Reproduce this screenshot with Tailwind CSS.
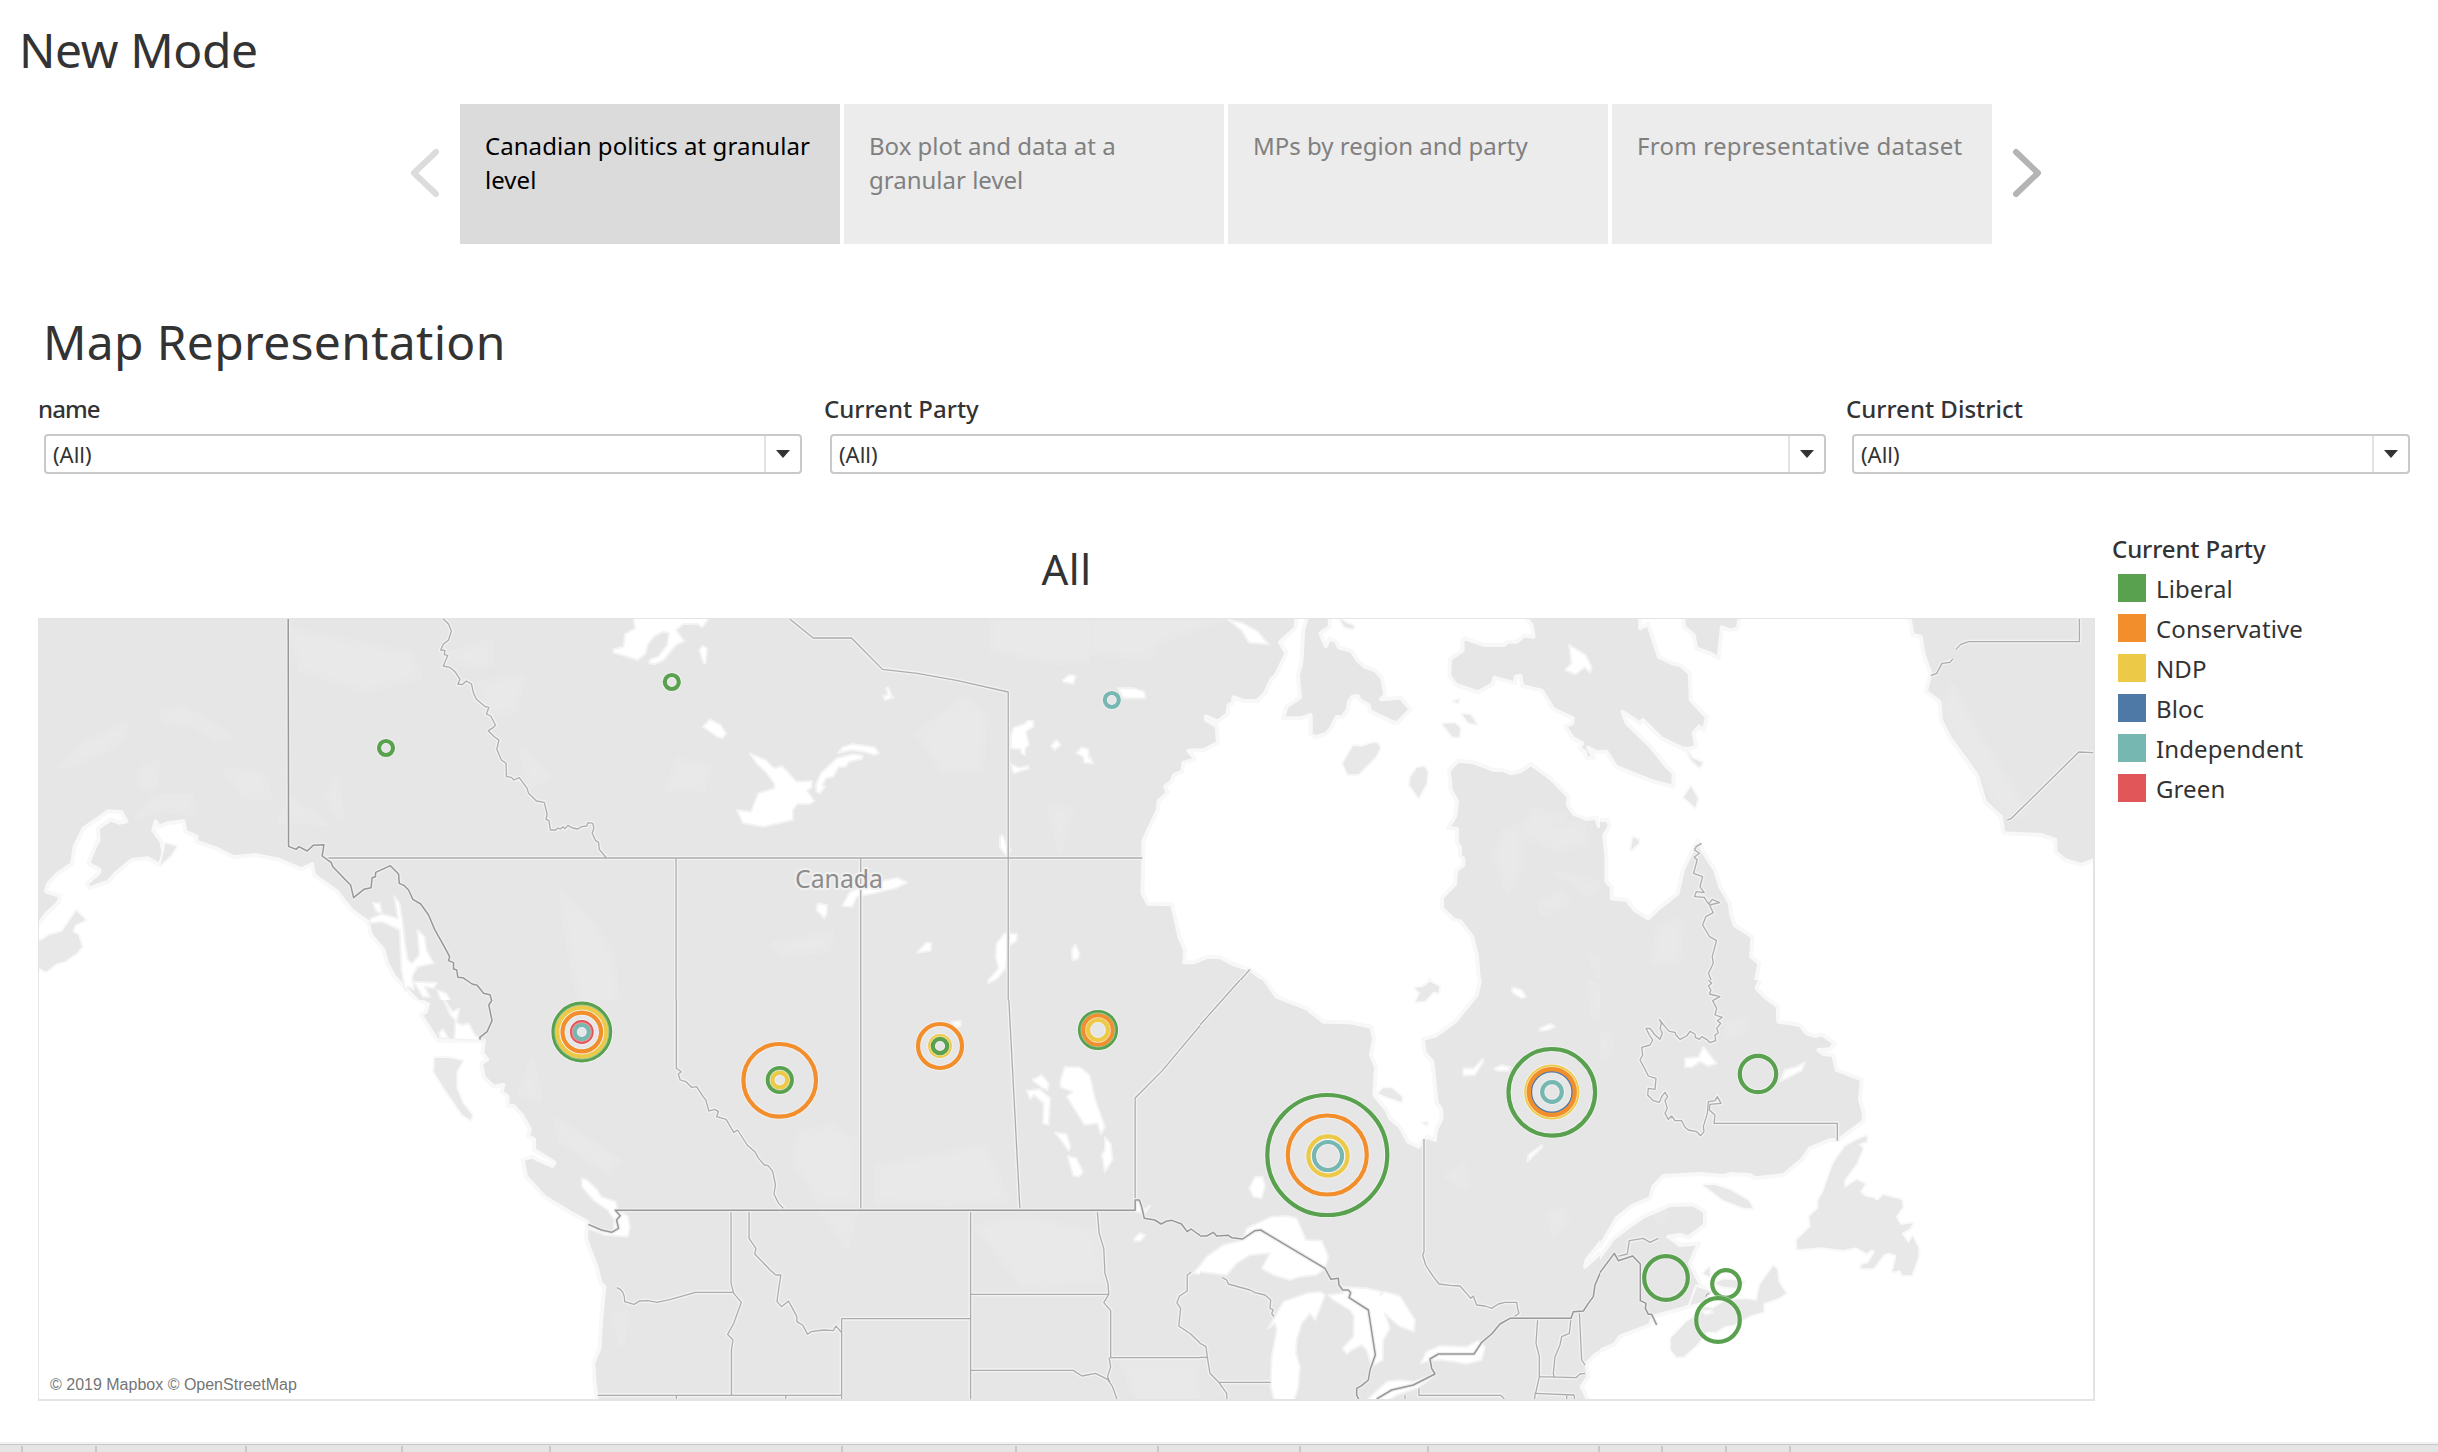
<!DOCTYPE html>
<html lang="en">
<head>
<meta charset="utf-8">
<title>New Mode</title>
<script src="https://cdn.jsdelivr.net/npm/@tailwindcss/browser@4"></script>
</head>
<body class="bg-white">
<main class="flex h-[1452px] w-[2438px] flex-col overflow-hidden bg-white font-['Noto_Sans','Open_Sans',sans-serif] text-[#333]">
  <h1 class="h-[104px] shrink-0 pl-[19px] text-[48px] leading-[99px] tracking-[-0.4px]">New Mode</h1>

  <nav class="flex h-[140px] shrink-0 items-stretch pl-[408px]">
    <svg class="mt-[42px] mr-[18px] h-[54px] w-[34px]" viewBox="0 0 34 54" fill="none" stroke="#dcdcdc" stroke-width="6" stroke-linecap="round" stroke-linejoin="round"><path d="M28 6L6 27L28 48"/></svg>
    <div class="flex gap-1 text-[24px] leading-[34px] text-[#808080]">
      <div class="w-[380px] bg-[#dbdbdb] pt-[25px] pr-4 pl-[25px] tracking-[0.05px] text-black">Canadian politics at granular level</div>
      <div class="w-[380px] bg-[#ececec] pt-[25px] pr-20 pl-[25px]">Box plot and data at a granular level</div>
      <div class="w-[380px] bg-[#ececec] pt-[25px] pr-4 pl-[25px]">MPs by region and party</div>
      <div class="w-[380px] bg-[#ececec] pt-[25px] pr-4 pl-[25px] tracking-[0.25px]">From representative dataset</div>
    </div>
    <svg class="mt-[42px] ml-[18px] h-[54px] w-[34px]" viewBox="0 0 34 54" fill="none" stroke="#b4b4b4" stroke-width="6" stroke-linecap="round" stroke-linejoin="round"><path d="M6 6L28 27L6 48"/></svg>
  </nav>

  <h2 class="mt-[67px] shrink-0 pl-[43px] text-[48px] leading-[62px] tracking-[0.3px]">Map Representation</h2>

  <section class="mt-[20px] flex h-[81px] shrink-0 pl-[38px]">
    <div class="w-[786px]">
      <div class="text-[24px] leading-8 font-medium tracking-[-0.9px]">name</div>
      <div class="mt-[9px] ml-[6px] flex h-10 w-[758px] rounded border-2 border-[#c9c9c9]">
        <span class="flex-1 pl-[7px] text-[22px] leading-[36px]">(All)</span>
        <span class="flex w-9 items-center justify-center border-l-2 border-[#e3e3e3]"><svg class="h-2 w-[14px]" viewBox="0 0 14 8" fill="#333"><path d="M0 0H14L7 8Z"/></svg></span>
      </div>
    </div>
    <div class="w-[1022px]">
      <div class="text-[24px] leading-8 font-medium">Current Party</div>
      <div class="mt-[9px] ml-[6px] flex h-10 w-[996px] rounded border-2 border-[#c9c9c9]">
        <span class="flex-1 pl-[7px] text-[22px] leading-[36px]">(All)</span>
        <span class="flex w-9 items-center justify-center border-l-2 border-[#e3e3e3]"><svg class="h-2 w-[14px]" viewBox="0 0 14 8" fill="#333"><path d="M0 0H14L7 8Z"/></svg></span>
      </div>
    </div>
    <div>
      <div class="text-[24px] leading-8 font-medium">Current District</div>
      <div class="mt-[9px] ml-[6px] flex h-10 w-[558px] rounded border-2 border-[#c9c9c9]">
        <span class="flex-1 pl-[7px] text-[22px] leading-[36px]">(All)</span>
        <span class="flex w-9 items-center justify-center border-l-2 border-[#e3e3e3]"><svg class="h-2 w-[14px]" viewBox="0 0 14 8" fill="#333"><path d="M0 0H14L7 8Z"/></svg></span>
      </div>
    </div>
  </section>

  <section class="flex h-[968px] shrink-0 pl-[38px]">
    <div class="w-[2057px] pt-[67px]">
      <h3 class="h-[77px] text-center text-[42px] leading-[56px] tracking-[0.5px]">All</h3>
      <div class="relative h-[783px] border-t border-r-2 border-b-2 border-l border-[#e4e4e4]">
        <svg id="map" class="block h-[780px] w-[2054px]" viewBox="39 619 2054 780"></svg>
        <span class="absolute bottom-[2px] left-[11px] font-['Liberation_Sans',Arial,sans-serif] text-[16px] leading-6 text-[#757575]">© 2019 Mapbox © OpenStreetMap</span>
      </div>
    </div>
    <aside class="pt-[59px] pl-[17px]">
      <div class="mb-[3px] text-[24px] leading-8 font-medium tracking-[-0.1px]">Current Party</div>
      <ul id="legend" class="pl-[6px] text-[24px] leading-10 tracking-[0.1px]"></ul>
    </aside>
  </section>

  <footer class="mt-auto h-[10px] shrink-0 border-t-2 border-[#f2f2f2]">
    <div id="tabs" class="flex h-2 border-t border-[#c8c8c8] bg-[#e5e5e5] pt-px"></div>
  </footer>
</main>
<script>
const C = {g:'#59a14f', o:'#f28e2b', y:'#edc948', b:'#4e79a7', t:'#76b7b2', r:'#e15759'};

document.getElementById('legend').innerHTML = [['Liberal','g'],['Conservative','o'],['NDP','y'],['Bloc','b'],['Independent','t'],['Green','r']]
  .map(([n,c]) => `<li class="flex h-10 items-center gap-[10px]"><i class="block size-7" style="background:${C[c]}"></i><span class="pt-[2px]">${n}</span></li>`).join('');

let last = 0;
document.getElementById('tabs').innerHTML = [23,97,247,403,551,843,1017,1159,1301,1429,1600,1663,1727,1791]
  .map(x => { const w = x - last; last = x; return `<i class="block h-full shrink-0 border-r-2 border-[#c8c8c8]" style="width:${w}px"></i>`; }).join('');

// Base map tiles: shade, water, isles, lakes, province lines, country lines
const tiles = [
 {x:30,y:610,w:560,h:400,v:'1568 1200',
  shade:'M90,470L150,400 270,340 260,385 200,430 130,460ZM370,310L430,290 560,380 520,385 460,345 380,335ZM550,480L650,490 670,560 600,560ZM300,500L320,470 355,460 350,530 310,535ZM730,60L1060,130 1090,200 940,240 760,180ZM1150,140L1290,95 1290,160 1250,170ZM1260,220L1380,200 1360,300 1290,310ZM1380,420L1450,500 1400,530ZM300,620L350,560 450,560 460,610 370,600ZM730,570L830,640 700,630ZM830,560L860,510 870,620Z',
  water:'M20,948L45,912 78,880 86,858 45,845 50,822 78,790 118,762 125,710 150,655 185,630 218,604 255,606 270,634 250,638 225,628 190,655 192,690 180,715 163,760 195,780 192,790 160,820 165,835 220,815 240,790 285,750 330,745 362,765 375,735 368,695 345,660 352,634 362,650 385,640 430,634 435,665 466,680 465,695 520,715 570,742 630,735 700,750 760,778 790,762 795,795 860,845 900,900 945,935 955,975 990,1020 1000,1060 1020,1100 1060,1145 1110,1200 1115,1220 0,1220 0,960Z',
  isles:'M10,1005L55,975 90,965 130,902 155,930 125,945 120,965 135,975 145,1010 130,1030 95,1055 75,1060 45,1085 10,1065ZM365,765L380,700 410,710 395,735Z',
  lakes:'M960,878L980,880 985,908 970,905ZM1020,858L1035,880 1040,915 1045,950 1050,1000 1058,1050 1070,1060 1090,1035 1085,960 1105,980 1110,1020 1130,1060 1085,1070 1070,1100 1075,1140 1060,1130 1050,1140 1040,1080 1035,960 985,935 950,940 955,925 985,912 1030,925ZM1075,1115L1140,1118 1130,1135 1105,1130 1120,1160 1100,1160ZM1140,1140L1165,1150 1180,1175 1175,1200 1150,1170Z',
  thin:'M825,744H1568M1157,27L1172,42 1180,63 1172,90 1157,103 1150,120 1162,122 1160,134 1170,136 1157,168 1175,172 1190,185 1204,208 1198,222 1210,224 1222,213 1236,222 1242,250 1250,268 1275,290 1285,292 1278,312 1290,318 1303,345 1298,352 1283,362 1300,380 1313,390 1307,418 1320,450 1333,460 1334,500 1348,502 1355,510 1370,503 1392,535 1396,550 1418,573 1440,577 1448,612 1445,628 1453,632 1457,660 1472,660 1478,654 1488,658 1492,648 1498,654 1508,645 1520,655 1535,658 1560,648 1568,636',
  bold:'M723,27L724,709 745,718 753,710 776,723 793,706 823,704 818,738 843,757 848,770 898,826 906,863 935,838 955,833 958,803 967,800 968,787 1009,767 1032,792 1034,820 1047,826 1060,840 1072,868 1094,882 1116,915 1133,958 1160,1010 1175,1040 1172,1052 1186,1058 1186,1077 1195,1080 1198,1102 1212,1103 1238,1122 1252,1126 1270,1150 1288,1154 1292,1170 1285,1200'},
 {x:560,y:610,w:560,h:400,v:'1568 1200',
  shade:'M1000,370L1130,270 1190,310 1180,480 1070,480ZM1210,27H1568V130L1400,160 1210,120ZM300,540L330,450 420,470 400,540ZM0,850L100,950 150,1050 160,1200 60,1200ZM600,1000L760,970 750,1020 620,1030ZM1370,590L1430,600 1400,720Z',
  lakes:'M203,10H425L416,27 398,52 385,42 345,42 325,60 348,93 325,105 290,150 265,163 250,160 252,148 275,140 300,105 305,70 290,65 265,78 245,105 240,130 218,150 150,128 150,118 178,110 182,72 210,55ZM390,120L400,107 412,115 408,160 402,160ZM400,350L420,328 450,345 465,370 455,385 440,380ZM532,430L575,450 600,475 622,468 662,515 705,513 705,530 692,543 712,573 700,582 665,582 652,600 652,630 570,650 512,640 496,600 535,605 555,550 600,535 600,520 575,485 550,460ZM778,430L790,412 818,402 882,412 893,430 880,435 850,425 815,420ZM716,525L730,490 775,445 820,432 848,437 845,447 810,455 800,470 780,472 765,500 745,505 735,525 742,530 728,550 718,545ZM905,258L918,255 913,235 918,232 925,245 928,258 935,262 910,270ZM1408,210L1425,195 1443,197 1438,222 1410,216ZM1262,380L1270,352 1300,342 1310,332 1326,332 1325,350 1305,365 1313,403 1303,415 1302,435 1292,430 1290,418 1262,415ZM1262,462L1285,473 1312,468 1312,476 1270,490ZM1375,408L1390,390 1402,404 1385,420ZM1446,430L1460,412 1480,418 1480,440 1492,460 1468,458 1465,440ZM1232,680L1240,676 1248,700 1262,722 1250,738 1232,712ZM790,888L810,848 850,825 945,803 972,818 940,835 830,862 818,890ZM722,880L748,885 747,912 740,925 718,900ZM1000,1028L1025,998 1040,998 1038,1022ZM1222,1000L1245,970 1280,972 1278,992 1255,1010 1248,1075 1225,1105 1200,1120 1198,1112 1228,1075 1220,1040ZM1435,1050L1433,1020 1443,1003 1455,1030 1450,1048Z',
  thin:'M643,27L709,84H816L903,178 1000,190 1110,211 1255,246V1180L1258,1200M0,744H1568M325,744V1200M842,744V1200M0,658L8,650 14,656 22,646 35,654 50,657 60,650 75,648 78,638 92,640 95,655 90,670 100,692 108,697 110,718 130,744'},
 {x:1090,y:610,w:560,h:420,v:'1568 1260',
  shade:'M180,100L370,27H0V130L170,140ZM1130,740L1160,660 1210,650 1205,780 1170,840ZM1240,600L1330,620 1300,650 1380,640 1390,700 1310,720 1200,670ZM1310,790L1430,820 1400,850ZM1400,1040L1460,1060 1430,1105ZM1260,880L1320,850 1340,880 1270,910Z',
  water:'M580,10L575,55 532,97 550,130 520,197 508,208 490,250 468,273 430,273 402,262 400,280 388,285 385,312 358,335 325,320 325,330 355,348 358,398 320,420 275,422 292,442 290,450 262,458 258,485 235,495 230,512 210,530 218,548 192,573 190,600 150,690 147,850 163,881 230,883 250,980 266,1020 264,1057 290,1057 330,1040 365,1042 400,1062 448,1078 500,1120 520,1160 610,1198 650,1235 730,1238 790,1250 800,1280 960,1280 1020,1240 1085,1155 1090,1120 1083,1035 1070,980 1038,935 1018,928 986,895 986,862 1022,822 1025,782 1045,765 1045,745 1036,738 1036,712 1028,700 1027,657 1003,653 1022,620 1028,575 1010,540 1005,482 1030,452 1075,457 1130,480 1155,480 1180,490 1205,483 1235,462 1290,505 1340,560 1338,585 1355,612 1390,627 1417,623 1425,648 1438,645 1450,627 1455,655 1440,685 1446,740 1438,745 1447,760 1447,815 1462,825 1470,850 1460,863 1502,865 1512,895 1550,922 1600,922 1600,508 1568,505 1505,488 1470,465 1448,427 1415,425 1395,413 1412,445 1390,445 1385,425 1370,415 1378,400 1352,385 1330,348 1350,340 1352,325 1297,297 1265,242 1210,228 1205,197 1192,200 1190,220 1132,203 1128,222 1087,247 1025,225 1006,198 1008,147 1043,122 1043,90 1050,85 1105,105 1160,105 1170,95 1195,95 1215,77 1242,80 1237,45 1222,27 1222,10H670L672,50 645,70 660,108 672,85 690,95 697,113 732,122 750,152 770,170 800,182 818,205 827,255 815,268 850,265 870,263 898,298 862,338 850,338 785,305 780,285 755,270 750,258 735,260 725,275 722,300 707,320 690,322 675,355 660,372 630,382 618,372 618,315 590,325 540,325 550,290 588,262 582,195 592,155 597,60 610,10Z',
  isles:'M708,460L737,408 760,410 790,400 805,400 812,415 800,440 752,492 722,493ZM898,500L915,475 935,470 945,485 942,520 920,563 895,525ZM988,342L1022,340 1036,355 1033,380 1015,380ZM1043,313L1065,315 1083,343 1060,338ZM908,1135L930,1128 950,1110 978,1130 975,1145 960,1143 935,1172 915,1175 925,1145ZM1518,683L1536,690 1532,705 1512,720ZM1018,273L1033,270 1030,278ZM700,27L720,40 740,48 735,57 712,50Z',
  lakes:'M388,30L425,38 470,65 500,103 445,98 425,62ZM78,235L120,234 152,245 155,265 95,265ZM1342,105L1388,135 1405,172 1400,188 1385,172 1360,193 1330,180 1348,160ZM1490,307L1508,308 1545,340 1580,345V420L1510,350ZM1537,20H1568V40H1549L1547,57H1537ZM1182,1132L1205,1132 1220,1152 1220,1165 1200,1162ZM-10,440L0,440 8,460H-10Z',
  thin:'M0,744H146M448,1078L296,1260'},
 {x:1200,y:980,w:500,h:472,v:'1500 1416',
  shade:'M1050,700L1090,690 1100,730 1060,760ZM740,590L790,560 800,620ZM1170,10L1260,30 1250,100 1180,110Z',
  water:'M180,-20L195,0 230,50 320,85 370,125 450,127 515,140 522,175 513,225 528,262 523,345 560,390 570,415 600,440 625,485 655,500 680,470 705,480 708,450 725,415 722,385 710,370 697,245 675,220 668,178 710,165 765,125 830,45 840,0V-20ZM1145,1220L1165,1190 1160,1150 1185,1125 1250,1090 1260,1070 1290,1075 1520,1000V1290H1180L1150,1230ZM1155,860L1160,840 1200,790 1250,715 1300,675 1350,655 1360,625 1390,590 1520,580V680L1430,675 1350,700 1260,750 1210,810Z',
  isles:'M535,340L550,325 575,325 605,350 605,365 560,350ZM645,25L670,20 690,5 718,20 715,38 700,35 675,62 648,65 660,38ZM668,428H683L680,435Z',
  lakes:'M-10,870L20,830 70,795 130,780 140,745 215,710 260,708 290,715 318,780 365,782 385,830 375,865 350,885 300,890 270,900 220,885 185,865 210,820 150,825 110,850 80,885 -10,875ZM205,1045L250,965 320,940 360,935 375,945 360,985 345,1020 330,1000 305,1030 290,1080 288,1120 300,1160 295,1220 280,1270H225L212,1220 215,1130 230,1050 225,1030ZM385,945L430,940 425,920 500,925 545,935 540,945 555,935 600,948 645,1020 642,1055 600,1040 570,1015 555,1000 570,1045 550,1080 548,1140 515,1160 500,1110 485,1095 455,1110 440,1122 428,1105 460,1070 462,1010 450,990 400,960ZM490,1270L560,1205 600,1200 640,1205 700,1185 700,1190 650,1225 590,1245 550,1270ZM662,1150L680,1115 720,1097 800,1100 835,1082 855,1100 845,1140 800,1152 765,1145 720,1140 690,1142ZM148,625L165,590 188,590 195,620 185,655 160,650ZM790,265L820,265 848,237 850,245 825,285 790,287ZM883,265L905,255 930,262 925,272 890,272ZM982,545L985,525 1025,495 1028,500ZM1020,145L1050,132 1065,140 1045,150 1020,152ZM937,22L965,30 978,50 965,55 937,38Z',
  thin:'M672,477V815L668,825 677,855 700,890 717,912 750,916 780,918 795,935 812,955 820,948 830,975 855,978 875,985 895,972 915,967 950,967 953,985 957,1000 935,1015M120,0L0,135M67,893L80,900 85,912 150,930 165,938 195,945 212,960 210,985 220,990 215,1000 222,1010M0,1090L18,1100 22,1132 30,1180 55,1205 80,1240 82,1280M0,1132H22M57,1207H212M657,1225V1246H903L913,1257M615,1246V1270M1013,1017L1008,1090 1018,1130V1190L1003,1257M1018,1190L1128,1193 1140,1182 1155,1180M1113,1017L1108,1060 1085,1070 1080,1095 1065,1130 1060,1180 1062,1190M1138,995L1145,1140 1155,1155M1003,1240L1122,1245 1124,1257M1100,1245V1257',
  bold:'M0,768L20,768 40,757 50,768 85,766 95,773 128,777 165,752 182,750 375,865 393,898 415,895 417,915 428,930 445,930 452,938 447,953 505,990 526,1125 510,1170 505,1200 485,1217 470,1225V1245L477,1260M530,1257L575,1230 640,1215 705,1182 695,1165 690,1137 715,1122H822L845,1087 875,1062 900,1032 930,1015H1113L1120,995 1150,993 1165,970 1180,950 1185,915 1200,880 1243,820 1257,840'},
 {x:1600,y:520,w:838,h:480,v:'1568 1440',
  shade:'M640,560L680,700 760,890 800,880 700,620 660,500ZM110,1220L150,1200 150,1320 100,1330Z',
  water:'M75,280V325L90,312 110,410 135,430 150,435 168,460 170,540 190,575 200,590 195,630 185,620 175,640 180,680 160,690 115,655 80,600 75,610 42,575 50,610 95,680 125,740 138,760 137,800 100,785 60,760 30,740 12,695H-20V900H15L18,920 8,945 12,1010 12,1085 22,1100 22,1135 50,1140 65,1170 90,1195 110,1165 145,1120 155,1050 170,1000 183,962 195,1000 215,1050 225,1100 243,1150 245,1180 252,1215 285,1250 283,1310 298,1330 292,1380 310,1420 330,1460H940V1010L900,1035 870,1020 852,995 852,960 825,945 755,940 750,890 720,845 705,765 685,720 655,655 638,600 635,545 610,515 618,460 605,400 600,350 585,345 580,300 570,280H262L258,325 245,332 228,322 222,415 205,400 180,385 175,345 157,320 155,280Z',
  isles:'M170,800L183,835 178,862 157,832ZM62,952L72,960 72,970 58,990ZM160,685L172,715 192,728 186,742 172,722Z',
  thin:'M897,290V365H690L675,373 666,388M660,417L655,427 640,430 630,460 619,467M925,698L896,696 770,895 762,900M190,970L180,980 177,990 186,1000 176,1012 182,1020 175,1060 192,1070 187,1100 195,1118 180,1115 177,1130 195,1132 203,1152 210,1138 224,1148 205,1155 212,1178 198,1190 192,1215 205,1250 218,1262 210,1310 212,1330 203,1360 210,1390 202,1395 205,1415 222,1440'},
 {x:1600,y:980,w:520,h:472,v:'1560 1416',
  shade:'M0,160L30,170 30,220 0,230ZM380,130L430,120 440,150 380,170ZM715,685L735,675 750,690 735,705ZM160,690L200,700 180,730Z',
  water:'M480,-20V0L470,25 500,55 533,78 535,125 570,130 600,135 620,160 645,168 665,163 705,190 690,208 655,210 670,222 700,225 710,270 785,298 780,360 792,400 790,425 715,480 690,480 630,505 605,540 550,585 465,595 450,585 395,582 370,588 300,582 190,588 160,620 150,655 95,678 50,715 0,800 -20,820V860L0,830 40,775 80,745 130,710 210,675 280,673 315,695 315,735 265,773 240,765 205,770 240,795 298,790 285,815 270,850 290,890 305,918 335,935 310,955 280,975 250,985 160,1010 150,1035 60,1070 45,1093 0,1112 -20,1120V1290H1580V-20Z',
  isles:'M310,615L345,615 390,630 445,662 458,685 430,683 370,660ZM735,500L770,480 800,468 800,485 775,492 788,505 770,550 733,600 733,625 770,600 795,612 780,635 795,650 820,655 832,662 850,645 905,660 908,680 888,710 900,735 938,730 930,745 905,760 925,790 938,770 955,805 955,830 935,885 908,885 900,870 878,875 890,825 865,818 850,825 820,865 782,865 785,855 805,848 825,815 815,808 800,820 768,802 730,810 665,802 592,808 590,780 632,740 628,710 655,685 655,660 668,640 700,550ZM213,1075L260,1025 300,1000 310,980 340,985 380,960 440,958 470,962 480,915 520,858 532,870 535,905 558,940 535,955 490,970 490,995 455,1005 400,1035 375,1038 350,1055 320,1055 290,1095 250,1130 230,1130 213,1110ZM345,910L370,898 400,900 432,905 420,925 370,920ZM310,880L328,862 330,890ZM290,920L335,935 310,965 270,975Z',
  lakes:'M255,235L295,232 310,200 350,250 325,258 300,245 275,262 255,262ZM540,305L555,270 590,260 615,247 605,272ZM305,992L335,990 340,998 315,1004Z',
  thin:'M325,0L335,10 325,18 333,30 328,42 340,45 360,50 338,62 350,85 345,105 367,112 352,122 362,130 350,145 355,158 345,165 347,182 330,188 320,178 305,170 298,178 286,172 285,162 270,154 260,168 240,178 228,165 225,157 208,154 195,140 178,118 184,130 180,145 187,160 180,178 165,165 150,145 138,145 148,165 158,180 150,195 125,202 128,225 120,240 132,262 145,288 168,295 165,328 145,325 143,345 160,362 178,367 185,350 195,337 203,350 195,362 202,385 195,400 205,418 215,408 225,422 245,422 255,442 265,450 290,455 302,467 312,455 310,440 322,400 325,365 345,362 352,350 363,370 330,373 328,390 345,405 342,430H712V482M50,830L82,822 88,782 130,775 150,787 175,775M317,950Q320,940 328,940',
  bold:'M-2,880L43,820 55,842 98,828 121,852V962L138,970 136,985 145,1003 155,1003 170,1035'},
 {x:30,y:1000,w:640,h:452,v:'1568 1356',
  shade:'M1200,280L1230,180 1250,300ZM1290,360L1440,480 1420,520 1300,420ZM1430,950L1460,940 1450,1030Z',
  water:'M-20,-20H952V0L975,12 970,35 958,45 998,122H1112L1108,160 1120,178 1105,190 1112,232 1135,260 1160,255 1155,275 1170,290V318L1185,318 1205,345 1225,388 1220,410 1235,418V450L1262,470 1285,488 1280,498 1245,480 1232,470 1207,478 1215,530 1260,590 1320,635 1365,665 1362,715 1372,750 1388,800 1398,850 1407,860 1400,950 1395,1045 1380,1090 1383,1150 1392,1220H-20Z',
  isles:'M992,174L1030,174 1060,183 1045,215V265L1060,310 1083,345 1080,360 1060,345 1015,265 990,215Z',
  lakes:'M1012,-5L1035,35 1052,25 1045,68 1058,75 1075,70 1090,105 1110,122 1040,118 1042,60 1030,45ZM1002,98L1012,88 1025,115H1005ZM1352,535L1365,540 1390,570 1400,590 1435,605 1440,630 1465,650 1470,680 1465,710 1410,705 1368,685V672L1400,690 1430,695 1432,660 1415,630 1380,600 1352,560Z',
  thin:'M1438,863Q1457,870 1457,905L1480,913 1495,902 1510,898 1535,906 1555,898 1568,902M1391,1186H1568',
  bold:'M1132,0L1124,15 1132,62 1120,95 1102,112 1103,119M1568,631H1434L1446,647 1437,660 1442,685 1425,697 1400,690 1368,673'},
 {x:640,y:1000,w:560,h:452,v:'1463.5 1356',
  shade:'M620,500L760,470 900,440 930,520 960,600 800,610 620,600ZM420,400L500,380 560,420V600H470L400,480ZM880,680L1000,650 1190,700 1200,840 1000,860ZM1260,1090H1460V1196H1300ZM480,640L560,640 540,740Z',
  lakes:'M1110,200L1150,202 1175,225 1190,300 1215,380 1205,402 1195,370 1162,375 1115,290 1130,275 1100,262 1098,245ZM1025,240L1050,225 1068,250 1065,272 1050,262ZM1010,272L1045,268 1072,295 1068,375 1053,370 1055,310 1030,285 1020,297ZM1085,397L1115,402 1125,440 1120,452ZM1118,468L1140,475 1158,515 1148,530 1132,527ZM1215,412L1230,430 1235,480 1215,515 1207,465 1215,450ZM1295,600L1308,600 1315,630 1333,617 1320,640 1295,635ZM1292,715L1305,700 1320,705 1310,722 1292,724ZM1445,820L1480,775V818L1465,822ZM815,65L838,63V78L825,83Z',
  thin:'M95,0V205L108,215 100,222 105,240 120,245 135,262 148,260 165,290 172,300 180,333 195,328 205,335 200,350 225,358 245,397 255,390 280,435 300,455 310,475 325,495 335,497 347,515 354,555 350,582 362,610 380,631M577,0V631M964,0L993,631M1520,0L1365,212 1294,294V600M238,631V850L245,880 265,907 245,970 229,1003 243,1020 239,1050V1186M285,631V715L303,745 300,762 340,810 355,825 368,825 362,870 358,905 370,920 388,903 396,920 410,950V965L425,975 438,1003 447,995 480,990 505,992 512,978 527,998M0,903L20,902 45,907 80,898 145,877H243M527,1200V956H864M864,631V1200M864,883H1225M1195,631L1200,700 1212,745 1215,820 1223,850 1225,883 1212,908 1230,932V1073H1483M864,1111H1132L1155,1128 1190,1120 1222,1138 1235,1160 1247,1200M1226,1073L1230,1100 1222,1130 1228,1147M0,1186H527M95,1186V1200M381,1186V1200M1440,817L1430,825V873L1410,888 1403,908 1413,925 1408,978 1440,1003 1478,1045',
  bold:'M0,631H1294V600H1305L1311,620 1318,655 1345,660 1362,672 1375,664 1390,661 1415,672 1430,695 1440,687 1458,702 1470,710 1485,707'}
];
const n = 'vector-effect="non-scaling-stroke" stroke-linejoin="round"';
let m = tiles.map(t => `<svg x="${t.x}" y="${t.y}" width="${t.w}" height="${t.h}" viewBox="0 0 ${t.v}" preserveAspectRatio="none"><rect width="1600" height="1500" fill="#e6e6e6"/>`
  + `<path d="${t.shade||''}" fill="#e9e9e9" stroke="#e8e8e8" stroke-width="6" ${n}/>`
  + `<path d="${t.water||''}" fill="#fff" stroke="#f8f8f8" stroke-width="4" ${n}/><path d="${t.isles||''}" fill="#e8e8e8" stroke="#f9f9f9" stroke-width="4" paint-order="stroke" ${n}/>`
  + `<path d="${t.lakes||''}" fill="#fff" stroke="#f3f3f3" stroke-width="2" ${n}/>`
  + `<g fill="none"><path d="${t.thin||''}" stroke="#f2f2f2" stroke-width="4" ${n}/><path d="${t.thin||''}" stroke="#adadad" stroke-width="1.3" ${n}/>`
  + `<path d="${t.bold||''}" stroke="#efefef" stroke-width="4" ${n}/><path d="${t.bold||''}" stroke="#989898" stroke-width="1.500" ${n}/></g></svg>`).join('');

m += `<text x="795" y="888" font-size="26" textLength="88" lengthAdjust="spacingAndGlyphs" fill="#8c8c8c" stroke="#f1f1f1" stroke-width="4" paint-order="stroke" stroke-linejoin="round" font-family="Noto Sans, sans-serif">Canada</text>`;

// Party rings: [cx, cy, radius, party, ring width]
m += [[386,748,7,'g'],[671.8,682,7,'g'],[1111.8,700,7,'t'],
 [581.8,1032,28.3,'g'],[581.8,1032,24.4,'y'],[581.8,1032,19.3,'o'],[581.8,1032,9.8,'r'],[581.8,1032,7,'t'],
 [779.7,1080.3,36.3,'o'],[779.8,1080,12,'g'],[779.8,1080,7.4,'y'],
 [940,1046,22,'o'],[940,1046,9.8,'y'],[940,1046,7.2,'g'],
 [1098,1030,18,'g'],[1098,1030,14.4,'o'],[1098,1030,10,'y'],
 [1327.3,1155,60,'g'],[1327.3,1155,39.5,'o'],[1328,1156,19.6,'y'],[1328,1156,14,'t'],
 [1551.8,1092.3,43.3,'g'],[1551.8,1092,25.5,'y'],[1551.8,1092,22.6,'o',5],[1551.8,1092,20.2,'b',1.2],[1552,1092,9.8,'t'],
 [1758,1074,18.2,'g'],[1666,1278,21.8,'g'],[1726,1284,13.8,'g'],[1718,1320,21.8,'g']]
 .map(([x,y,r,c,w=4.2]) => (w > 2 ? `<circle cx="${x}" cy="${y}" r="${r}" fill="none" stroke="#fff" stroke-opacity=".4" stroke-width="${w+2}"/>` : '')
   + `<circle cx="${x}" cy="${y}" r="${r}" fill="none" stroke="${C[c]}" stroke-width="${w}"/>`).join('');
document.getElementById('map').innerHTML = m;
</script>
</body>
</html>
